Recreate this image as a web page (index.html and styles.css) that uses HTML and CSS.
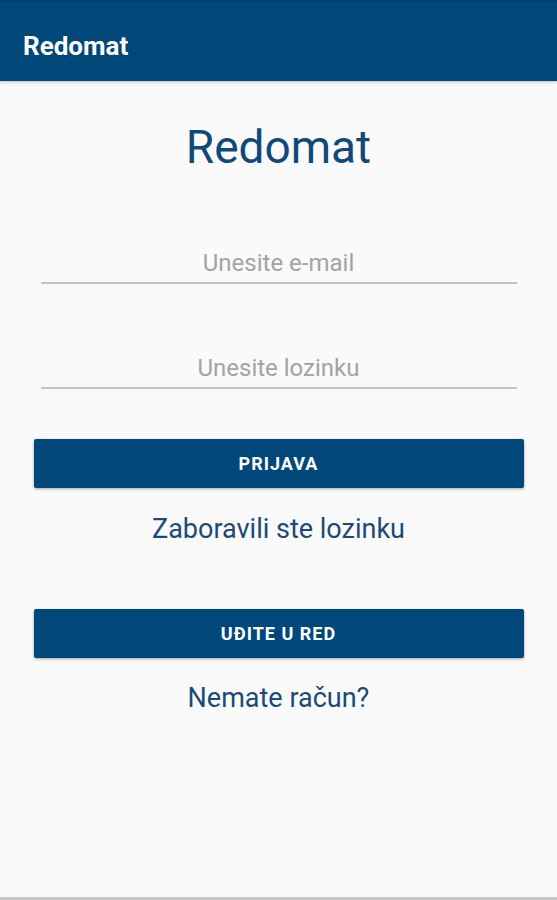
FILE: index.html
```html
<!DOCTYPE html>
<html lang="sr">

<head>
    <meta charset="UTF-8">
    <meta name="viewport" content="width=device-width, initial-scale=1.0">
    <title>Redomat</title>
    <link rel="stylesheet" href="styles.css">
</head>

<body>
    <div class="toolbar">
        <h1>Redomat</h1>
    </div>

    <div class="content">
        <h2 class="title">Redomat</h2>

        <div class="field">
            <input type="email" placeholder="Unesite e-mail">
        </div>
        <div class="field">
            <input type="password" placeholder="Unesite lozinku">
        </div>

        <button class="btn">PRIJAVA</button>
        <a class="link" href="#">Zaboravili ste lozinku</a>

        <button class="btn btn-second">UĐITE U RED</button>
        <a class="link" href="#">Nemate račun?</a>
    </div>
</body>

</html>
```
FILE: styles.css
```css
* {
    margin: 0;
    padding: 0;
    box-sizing: border-box;
    text-decoration: none;
}

html,
body {
    height: 100%;
}

body {
    background-color: #fafafa;
    font-family: Roboto, "Liberation Sans", sans-serif;
    border-bottom: 3px solid #c8c8c8;
}

.toolbar {
    height: 81px;
    background-color: #00477a;
    border-top: 2px solid #013d6d;
    display: flex;
    align-items: center;
    padding-left: 23px;
    padding-top: 8px;
    box-shadow: 0 1px 3px rgba(0, 0, 0, 0.25);
}

.toolbar h1 {
    color: #fff;
    font-size: 26px;
    font-weight: 700;
}

.content {
    display: flex;
    flex-direction: column;
    align-items: center;
}

.title {
    margin-top: 38px;
    color: #10487a;
    font-size: 46px;
    font-weight: 400;
    line-height: 56px;
}

.field {
    width: 476px;
    margin-top: 69px;
}

.field + .field {
    margin-top: 65px;
}

.field input {
    display: block;
    width: 100%;
    height: 40px;
    border: none;
    border-bottom: 2px solid #c2c2c2;
    background: transparent;
    text-align: center;
    font-family: Roboto, "Liberation Sans", sans-serif;
    font-size: 24px;
    color: #333;
    outline: none;
}

.field input::placeholder {
    color: #a3a3a3;
}

.btn {
    width: 490px;
    height: 49px;
    margin-top: 50px;
    background-color: #00477a;
    color: #fff;
    border: none;
    border-radius: 2px;
    font-family: Roboto, "Liberation Sans", sans-serif;
    font-size: 18px;
    font-weight: 700;
    letter-spacing: 1px;
    box-shadow: 0 1px 3px rgba(0, 0, 0, 0.35);
}

.btn-second {
    margin-top: 64px;
}

.link {
    margin-top: 25px;
    color: #1a4a78;
    font-size: 27px;
    line-height: 32px;
}

.btn-second + .link {
    margin-top: 24px;
}
```
